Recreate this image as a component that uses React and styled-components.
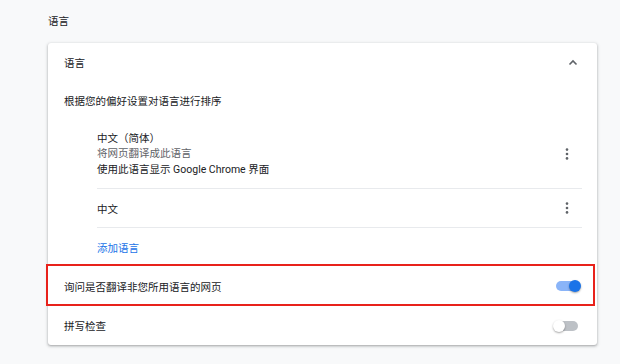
import styled, { createGlobalStyle } from 'styled-components';

const GlobalStyle = createGlobalStyle`
  body {
    margin: 0;
    background: #f8f9fa;
    font-family: Roboto, "Noto Sans CJK SC", sans-serif;
    font-size: 10.5px;
    color: #202124;
  }
`;

const Page = styled.div`
  width: 620px;
  height: 364px;
  padding-left: 48px;
  box-sizing: border-box;
  overflow: hidden;
`;

const SectionTitle = styled.h2`
  margin: 0;
  padding-top: 15px;
  height: 28px;
  line-height: 14px;
  font-size: 10.5px;
  font-weight: 400;
  color: #202124;
`;

const Card = styled.div`
  width: 549px;
  background: #fff;
  border-radius: 3px;
  box-shadow: 0 1px 2px rgba(60, 64, 67, 0.3), 0 1px 3px 1px rgba(60, 64, 67, 0.15);
`;

const Row = styled.div`
  position: relative;
  display: flex;
  align-items: center;
  justify-content: space-between;
  height: ${(p) => p.$h || 38}px;
  padding: 0 19px 0 16px;
  box-sizing: border-box;

  ${(p) =>
    p.$marked &&
    `
    &::after {
      content: '';
      position: absolute;
      left: -2px;
      right: 2px;
      top: -2px;
      bottom: 0;
      border: 2px solid #e8221b;
      pointer-events: none;
    }
  `}
`;

const LangList = styled.div`
  margin: 0 15px 0 49px;
`;

const LangItem = styled.div`
  display: flex;
  align-items: center;
  justify-content: space-between;
  height: ${(p) => p.$h}px;
  border-bottom: 1px solid #e8eaed;
  box-sizing: border-box;
  padding-top: ${(p) => p.$pt || 0}px;
`;

const AddRow = styled.div`
  display: flex;
  align-items: center;
  height: 38px;
  color: #1a73e8;
`;

const Lines = styled.div`
  display: flex;
  flex-direction: column;
  line-height: 15.5px;
`;

const Secondary = styled.span`
  color: #5f6368;
`;

const IconButton = styled.button`
  all: unset;
  width: 30px;
  height: 30px;
  display: flex;
  align-items: center;
  justify-content: center;
`;

const Toggle = styled.div`
  position: relative;
  width: 22px;
  height: 10px;
  border-radius: 5px;
  background: ${(p) => (p.$on ? '#8ab4f8' : '#bdc1c6')};

  &::after {
    content: '';
    position: absolute;
    top: -1px;
    left: ${(p) => (p.$on ? '13px' : '-3px')};
    width: 12px;
    height: 12px;
    border-radius: 50%;
    background: ${(p) => (p.$on ? '#1a73e8' : '#fff')};
    box-shadow: 0 1px 2px rgba(0, 0, 0, 0.35);
  }
`;

const Chevron = () => (
  <svg width="10" height="7" viewBox="0 0 10 7">
    <path d="M1.5 5.5 L5 2 L8.5 5.5" fill="none" stroke="#5f6368" strokeWidth="1.6" />
  </svg>
);

const Kebab = () => (
  <svg width="4" height="12" viewBox="0 0 4 12">
    <circle cx="2" cy="1.6" r="1.3" fill="#5f6368" />
    <circle cx="2" cy="6" r="1.3" fill="#5f6368" />
    <circle cx="2" cy="10.4" r="1.3" fill="#5f6368" />
  </svg>
);

export default function App() {
  return (
    <Page>
      <GlobalStyle />
      <SectionTitle>语言</SectionTitle>
      <Card>
        <Row>
          <span>语言</span>
          <IconButton style={{ marginRight: -10 }}>
            <Chevron />
          </IconButton>
        </Row>
        <Row>
          <span>根据您的偏好设置对语言进行排序</span>
        </Row>
        <LangList>
          <LangItem $h={70} $pt={1}>
            <Lines>
              <span>中文（简体）</span>
              <Secondary>将网页翻译成此语言</Secondary>
              <span>使用此语言显示 Google Chrome 界面</span>
            </Lines>
            <IconButton>
              <Kebab />
            </IconButton>
          </LangItem>
          <LangItem $h={39}>
            <span>中文</span>
            <IconButton>
              <Kebab />
            </IconButton>
          </LangItem>
          <AddRow>添加语言</AddRow>
        </LangList>
        <Row $h={40} $marked>
          <span>询问是否翻译非您所用语言的网页</span>
          <Toggle $on />
        </Row>
        <Row $h={39}>
          <span>拼写检查</span>
          <Toggle />
        </Row>
      </Card>
    </Page>
  );
}
